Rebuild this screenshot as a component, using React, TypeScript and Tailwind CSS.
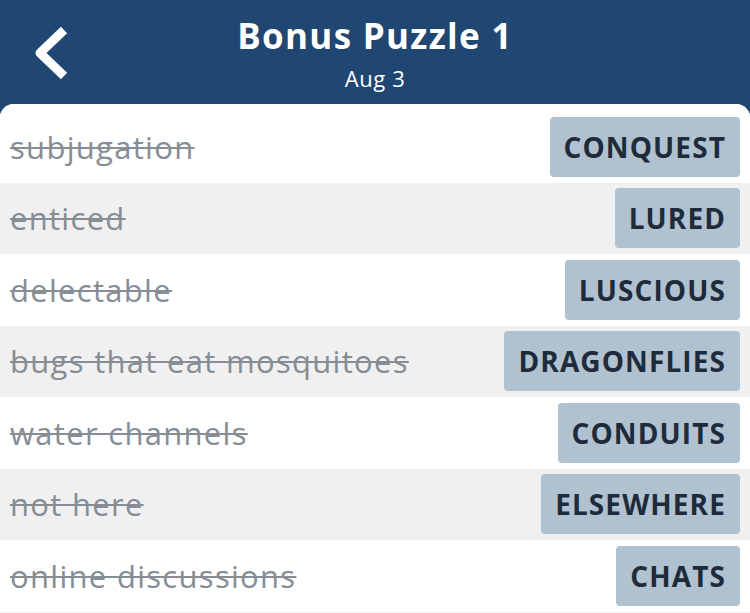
import React from 'react';

const clues = [
  { clue: 'subjugation', answer: 'CONQUEST' },
  { clue: 'enticed', answer: 'LURED' },
  { clue: 'delectable', answer: 'LUSCIOUS' },
  { clue: 'bugs that eat mosquitoes', answer: 'DRAGONFLIES' },
  { clue: 'water channels', answer: 'CONDUITS' },
  { clue: 'not here', answer: 'ELSEWHERE' },
  { clue: 'online discussions', answer: 'CHATS' }
];

const App = () => {
  return (
    <div className="w-[750px] h-[613px] overflow-hidden bg-[#204672] font-['Open_Sans','Noto_Sans',sans-serif]">
      <div className="relative h-[104px] flex flex-col items-center text-white">
        <button type="button" className="absolute left-[31px] top-[26px]">
          <svg width="40" height="56" viewBox="0 0 40 56">
            <path d="M33 4 L9 27 L33 50" fill="none" stroke="white" strokeWidth="9" strokeLinecap="butt" strokeLinejoin="round" />
          </svg>
        </button>
        <h1 className="mt-[13px] text-[35px] leading-[46px] font-bold tracking-[1.3px]">Bonus Puzzle 1</h1>
        <div className="mt-[5px] text-[22px] leading-[28px] tracking-[0.6px]">Aug 3</div>
      </div>
      <div className="bg-[#f4f4f4] rounded-t-[14px] overflow-hidden h-full">
        <div className="bg-white pt-[7px]">
          {clues.map((c, i) => (
            <div
              key={c.clue}
              className={`flex items-center justify-between h-[71.5px] pl-[10px] pr-[10px] ${
                i % 2 === 1 ? 'bg-[#f0f0f0]' : 'bg-white'
              }`}>
              <span className="text-[31px] tracking-[1.3px] text-[#868d95] line-through decoration-[2px]">{c.clue}</span>
              <span className="h-[60px] flex items-center px-[14px] rounded-[4px] bg-[#b0c1cf] text-[#1e2b3a] text-[28px] tracking-[1.1px] font-bold">
                {c.answer}
              </span>
            </div>
          ))}
        </div>
      </div>
    </div>
  );
};

export default App;
